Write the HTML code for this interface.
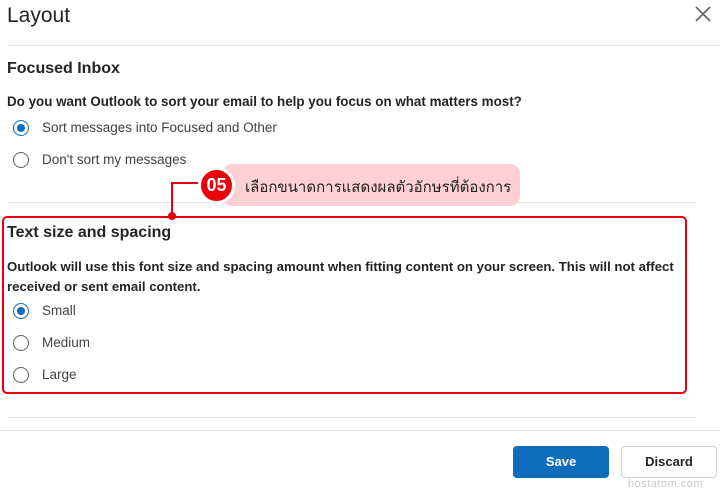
<!DOCTYPE html>
<html><head><style>
*{margin:0;padding:0;box-sizing:border-box}
body{width:720px;height:492px;background:#fff;font-family:"Liberation Sans","Noto Sans CJK SC",sans-serif;color:#242424;position:relative;overflow:hidden}
.a{position:absolute;white-space:nowrap}
.r{position:absolute;width:16px;height:16px;border:1px solid #616161;border-radius:50%}
.r.on{border-color:#0f6cbd}
.r.on::after{content:"";position:absolute;left:3px;top:3px;width:8px;height:8px;border-radius:50%;background:#0f6cbd}
.l{font-size:13.5px;color:#424242}
.hr{position:absolute;height:1px;background:#e6e6e6}
</style></head><body>
<div class="a" style="left:7px;top:4px;font-size:21px">Layout</div>
<svg class="a" style="left:694px;top:5px" width="18" height="18"><path d="M2 2L16 16M16 2L2 16" stroke="#616161" stroke-width="1.6"/></svg>
<div class="hr" style="left:7px;top:45px;width:713px"></div>
<div class="a" style="left:7px;top:60px;font-size:16px;font-weight:bold">Focused Inbox</div>
<div class="a" style="left:7px;top:94px;font-size:13.4px;font-weight:bold">Do you want Outlook to sort your email to help you focus on what matters most?</div>
<div class="r on" style="left:13px;top:120px"></div><div class="a l" style="left:42px;top:120px">Sort messages into Focused and Other</div>
<div class="r" style="left:13px;top:152px"></div><div class="a l" style="left:42px;top:152px">Don't sort my messages</div>
<div class="hr" style="left:7px;top:202px;width:690px"></div>
<div class="a" style="left:222px;top:164px;width:298px;height:42px;background:#fdd0d4;border-radius:10px"></div>
<div class="a" style="left:245px;top:175px;font-size:15px;color:#222">เลือกขนาดการแสดงผลตัวอักษรที่ต้องการ</div>
<div class="a" style="left:171px;top:183px;width:2px;height:34px;background:#e8000b"></div>
<div class="a" style="left:171px;top:182px;width:30px;height:2px;background:#e8000b"></div>
<div class="a" style="left:168px;top:212px;width:8px;height:8px;border-radius:50%;background:#e8000b"></div>
<div class="a" style="left:198px;top:167px;width:37px;height:37px;border-radius:50%;background:#e8000b;border:3px solid #fff;color:#fff;font-size:18px;font-weight:bold;text-align:center;line-height:31px">05</div>
<div class="a" style="left:2px;top:216px;width:685px;height:178px;border:2px solid #e8000b;border-radius:5px"></div>
<div class="a" style="left:7px;top:224px;font-size:16px;font-weight:bold">Text size and spacing</div>
<div class="a" style="left:7px;top:257px;font-size:13.2px;font-weight:bold;line-height:20px">Outlook will use this font size and spacing amount when fitting content on your screen. This will not affect<br>received or sent email content.</div>
<div class="r on" style="left:13px;top:303px"></div><div class="a l" style="left:42px;top:303px">Small</div>
<div class="r" style="left:13px;top:335px"></div><div class="a l" style="left:42px;top:335px">Medium</div>
<div class="r" style="left:13px;top:367px"></div><div class="a l" style="left:42px;top:367px">Large</div>
<div class="hr" style="left:7px;top:417px;width:690px"></div>
<div class="hr" style="left:0;top:430px;width:720px"></div>
<div class="a" style="left:513px;top:446px;width:96px;height:32px;background:#0f6cbd;border-radius:4px;color:#fff;font-size:13px;font-weight:bold;text-align:center;line-height:32px">Save</div>
<div class="a" style="left:621px;top:446px;width:96px;height:32px;border:1px solid #d1d1d1;border-radius:4px;font-size:13px;font-weight:bold;text-align:center;line-height:30px">Discard</div>
<div class="a" style="left:628px;top:478px;font-size:11px;color:#c8c8c8;letter-spacing:0.5px">hostatom.com</div>
</body></html>
